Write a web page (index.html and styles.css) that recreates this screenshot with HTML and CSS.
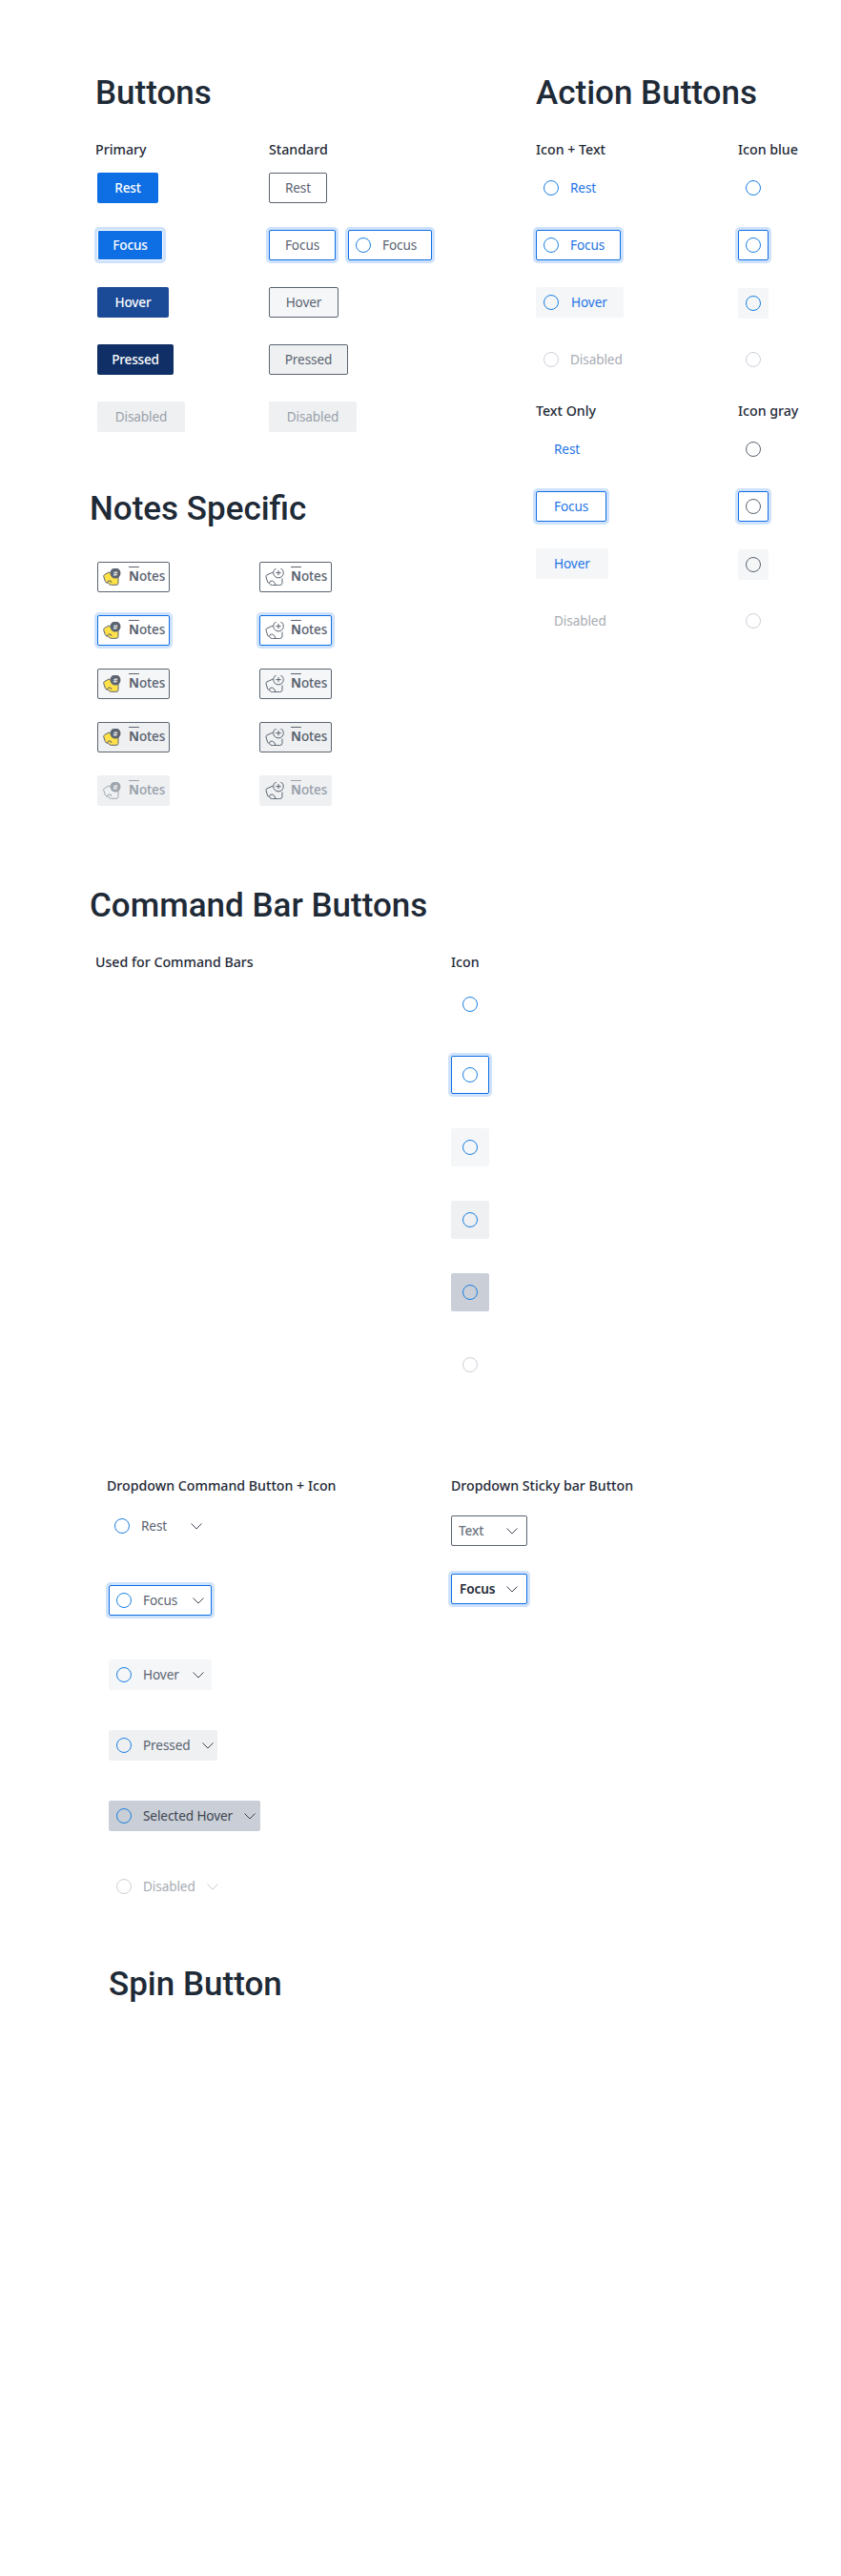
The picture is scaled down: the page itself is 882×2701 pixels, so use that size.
FILE: index.html
```html
<!DOCTYPE html>
<html lang="en">
<head>
<meta charset="utf-8">
<title>Buttons</title>
<link rel="stylesheet" href="styles.css">
</head>
<body>
<svg class="defs" width="0" height="0" aria-hidden="true">
  <symbol id="chev" viewBox="0 0 12 7"><path d="M.5.5 6 6 11.5.5" fill="none" stroke="currentColor"/></symbol>
  <symbol id="note-hash" viewBox="0 0 20 18">
    <path class="note-body" d="M6 4 1.6 6.6Q.4 7.4.8 8.8L2.4 13.6Q2.8 14.8 4 15L5.6 15.2Q6.4 17.3 8.6 17.3H14Q16 17.3 16 15.3V9Z"/>
    <path class="note-fold" d="M4 15Q5.5 12 8 13L9 15"/>
    <circle class="note-disc" cx="13" cy="5" r="5.5"/>
  </symbol>
  <symbol id="note-plus" viewBox="0 0 20 18">
    <path class="note-line" d="M8.4 4 2 6.8Q.6 7.5 1 9L2.6 14Q3 15.2 4.4 15.3Q5.2 17.6 7.6 17.6H15.4Q17.6 17.6 18 15.4V10.5"/>
    <path class="note-line" d="M4.4 15.3Q5.2 12.4 7.6 13Q10 13.6 11 17.5"/>
    <circle class="note-line" cx="14" cy="4.6" r="5.3"/>
    <path class="note-line" d="M14 2V7.2M11.4 4.6H16.6"/>
  </symbol>
</svg>

<div class="top">
  <div class="left-col">
    <h1 class="title">Buttons</h1>
    <div class="btn-cols">
      <div class="col-primary">
        <h2 class="label">Primary</h2>
        <div class="stack stack-in">
          <button class="btn primary w64">Rest</button>
          <button class="btn primary focus-inner w69">Focus</button>
          <button class="btn primary-hover w75">Hover</button>
          <button class="btn primary-pressed w80">Pressed</button>
          <button class="btn disabled w92">Disabled</button>
        </div>
      </div>
      <div>
        <h2 class="label">Standard</h2>
        <div class="stack">
          <button class="btn standard w61">Rest</button>
          <div class="focus-row">
            <button class="btn standard focus w70">Focus</button>
            <button class="btn standard focus w88 icon-left"><span class="ring blue"></span>Focus</button>
          </div>
          <button class="btn standard hover w73">Hover</button>
          <button class="btn standard pressed w83">Pressed</button>
          <button class="btn disabled w92">Disabled</button>
        </div>
      </div>
    </div>

    <h1 class="title title-notes">Notes Specific</h1>
    <div class="notes-grid">
      <button class="note"><svg class="note-icon" viewBox="0 0 20 18"><use href="#note-hash"/><text class="note-hash" x="13" y="8">#</text></svg><span class="note-text"><span class="access">N</span>otes</span></button>
      <button class="note"><svg class="note-icon" viewBox="0 0 20 18"><use href="#note-plus"/></svg><span class="note-text"><span class="access">N</span>otes</span></button>
      <button class="note focus"><svg class="note-icon" viewBox="0 0 20 18"><use href="#note-hash"/><text class="note-hash" x="13" y="8">#</text></svg><span class="note-text"><span class="access">N</span>otes</span></button>
      <button class="note focus"><svg class="note-icon" viewBox="0 0 20 18"><use href="#note-plus"/></svg><span class="note-text"><span class="access">N</span>otes</span></button>
      <button class="note hover"><svg class="note-icon" viewBox="0 0 20 18"><use href="#note-hash"/><text class="note-hash" x="13" y="8">#</text></svg><span class="note-text"><span class="access">N</span>otes</span></button>
      <button class="note hover"><svg class="note-icon" viewBox="0 0 20 18"><use href="#note-plus"/></svg><span class="note-text"><span class="access">N</span>otes</span></button>
      <button class="note pressed"><svg class="note-icon" viewBox="0 0 20 18"><use href="#note-hash"/><text class="note-hash" x="13" y="8">#</text></svg><span class="note-text"><span class="access">N</span>otes</span></button>
      <button class="note pressed"><svg class="note-icon" viewBox="0 0 20 18"><use href="#note-plus"/></svg><span class="note-text"><span class="access">N</span>otes</span></button>
      <button class="note note-off dim"><svg class="note-icon" viewBox="0 0 20 18"><use href="#note-hash"/><text class="note-hash" x="13" y="8">#</text></svg><span class="note-text"><span class="access">N</span>otes</span></button>
      <button class="note note-off"><svg class="note-icon" viewBox="0 0 20 18"><use href="#note-plus"/></svg><span class="note-text"><span class="access">N</span>otes</span></button>
    </div>
  </div>

  <div class="right-col">
    <h1 class="title">Action Buttons</h1>
    <div class="action-cols">
      <div>
        <h2 class="label">Icon + Text</h2>
        <div class="stack">
          <button class="act w92"><span class="ring blue"></span>Rest</button>
          <button class="act focus w89"><span class="ring blue"></span>Focus</button>
          <button class="act hover w92"><span class="ring blue"></span><span class="nudge">Hover</span></button>
          <button class="act off w92"><span class="ring faint"></span>Disabled</button>
        </div>
      </div>
      <div>
        <h2 class="label">Icon blue</h2>
        <div class="stack">
          <button class="sq"><span class="ring blue"></span></button>
          <button class="sq focus"><span class="ring blue"></span></button>
          <button class="sq hover drop1"><span class="ring blue"></span></button>
          <button class="sq"><span class="ring faint"></span></button>
        </div>
      </div>
      <div>
        <h2 class="label label-gap">Text Only</h2>
        <div class="stack">
          <button class="act text-only w74">Rest</button>
          <button class="act text-only focus w74">Focus</button>
          <button class="act text-only hover w76">Hover</button>
          <button class="act text-only off w92">Disabled</button>
        </div>
      </div>
      <div>
        <h2 class="label label-gap">Icon gray</h2>
        <div class="stack">
          <button class="sq"><span class="ring gray"></span></button>
          <button class="sq focus"><span class="ring gray"></span></button>
          <button class="sq hover drop1"><span class="ring gray"></span></button>
          <button class="sq"><span class="ring faint"></span></button>
        </div>
      </div>
    </div>
  </div>
</div>

<section class="command">
  <h1 class="title">Command Bar Buttons</h1>
  <div class="command-cols">
    <h2 class="label">Used for Command Bars</h2>
    <div>
      <h2 class="label">Icon</h2>
      <div class="stack-lg">
        <button class="sq40 first"><span class="ring blue"></span></button>
        <button class="sq40 focus"><span class="ring blue"></span></button>
        <button class="sq40 hover"><span class="ring blue"></span></button>
        <button class="sq40 pressed"><span class="ring blue"></span></button>
        <button class="sq40 selected"><span class="ring blue"></span></button>
        <button class="sq40"><span class="ring faint"></span></button>
      </div>
    </div>
  </div>
</section>

<section class="dropdowns">
  <div class="dd-col">
    <h2 class="label">Dropdown Command Button + Icon</h2>
    <div class="dd-stack">
      <button class="dd dd-rest w108"><span class="ring blue"></span>Rest<svg class="chev"><use href="#chev"/></svg></button>
      <button class="dd dd-spaced focus w108"><span class="ring blue"></span>Focus<svg class="chev"><use href="#chev"/></svg></button>
      <button class="dd hover w108"><span class="ring blue"></span>Hover<svg class="chev"><use href="#chev"/></svg></button>
      <button class="dd pressed w114"><span class="ring blue"></span>Pressed<svg class="chev"><use href="#chev"/></svg></button>
      <button class="dd selected w159"><span class="ring blue"></span>Selected Hover<svg class="chev"><use href="#chev"/></svg></button>
      <button class="dd dd-off w118"><span class="ring faint"></span>Disabled<svg class="chev"><use href="#chev"/></svg></button>
    </div>
  </div>
  <div>
    <h2 class="label">Dropdown Sticky bar Button</h2>
    <div class="sticky-stack">
      <button class="sticky">Text<svg class="chev"><use href="#chev"/></svg></button>
      <button class="sticky focus strong">Focus<svg class="chev"><use href="#chev"/></svg></button>
    </div>
  </div>
</section>

<h1 class="title title-spin">Spin Button</h1>
</body>
</html>
```
FILE: styles.css
```css
* { box-sizing: border-box; }
html, body { margin: 0; background: #fff; }
body {
  min-height: 2701px;
  font-family: "Noto Sans", "Open Sans", sans-serif;
  font-size: 13.6px;
  letter-spacing: -0.1px;
  color: #5b6470;
}
.defs { position: absolute; }
button {
  font: inherit;
  letter-spacing: inherit;
  color: inherit;
  margin: 0;
  padding: 0;
  border: 0;
  background: none;
  cursor: default;
  flex: none;
}
.title {
  margin: 0;
  font-family: Roboto, "Liberation Sans", sans-serif;
  font-size: 35px;
  line-height: 44px;
  font-weight: 500;
  letter-spacing: 0;
  color: #1f2a37;
  white-space: nowrap;
}
.label {
  margin: 0;
  height: 20px;
  font-size: 14.2px;
  line-height: 18px;
  font-weight: 500;
  letter-spacing: 0;
  color: #1f2a37;
  white-space: nowrap;
}

.top { display: flex; padding: 76px 0 0 100px; }
.left-col { width: 462px; flex: none; }
.btn-cols { display: grid; grid-template-columns: 182px auto; margin-top: 28px; }
.stack { display: flex; flex-direction: column; align-items: flex-start; gap: 28px; margin-top: 13px; }
.stack-in { padding-left: 2px; }
.focus-row { display: flex; gap: 13px; }

.btn {
  height: 32px;
  padding-bottom: 2px;
  border-radius: 2px;
  display: flex;
  align-items: center;
  justify-content: center;
  font-weight: 400;
  white-space: nowrap;
}
.primary { background: #0e6ee4; color: #fff; font-weight: 500; letter-spacing: -0.2px; }
.primary.focus-inner { border: 1px solid #fff; box-shadow: 0 0 0 3px #cfe2fb; }
.primary-hover { background: #1b4b96; color: #fff; font-weight: 500; letter-spacing: -0.2px; }
.primary-pressed { background: #0f2f66; color: #fff; font-weight: 500; letter-spacing: -0.2px; }
.disabled { background: #eef0f2; color: #9aa1aa; }
.standard { border: 1px solid #5b6470; background: #fff; color: #5b6470; }
.btn.hover { background: #f4f6f8; }
.btn.pressed { background: #eef0f2; }
.btn.focus { border-color: #0e6ee4; box-shadow: 0 0 0 3px #cfe2fb; }
.icon-left { justify-content: flex-start; padding-left: 7px; gap: 12px; }

.w61 { width: 61px; } .w64 { width: 64px; } .w69 { width: 69px; } .w70 { width: 70px; }
.w73 { width: 73px; } .w74 { width: 74px; } .w75 { width: 75px; } .w76 { width: 76px; }
.w80 { width: 80px; } .w83 { width: 83px; } .w88 { width: 88px; } .w89 { width: 89px; }
.w92 { width: 92px; } .w108 { width: 108px; } .w114 { width: 114px; } .w118 { width: 118px; } .w159 { width: 159px; }

.ring { width: 16px; height: 16px; border: 1px solid; border-radius: 50%; flex: none; display: block; }
.ring.blue { border-color: #1c80e2; }
.ring.gray { border-color: #5b6470; }
.ring.faint { border-color: #ccd1d8; }
.btn .ring, .act .ring, .dd .ring { margin-top: 2px; }

.title-notes { margin: 59px 0 0 -6px; }
.notes-grid { display: grid; grid-template-columns: 170px 76px; row-gap: 24px; margin: 33px 0 0 2px; }
.note {
  width: 76px;
  height: 32px;
  border: 1px solid #5b6470;
  border-radius: 2px;
  background: #fff;
  display: flex;
  align-items: center;
  padding-left: 5px;
  gap: 7px;
  color: #5b6470;
  --note-fill: #ffe14a;
  --note-line: #5b6470;
  --note-disc: #5b6470;
}
.note.hover { background: #f4f6f8; }
.note.pressed { background: #eef0f2; }
.note.focus { border-color: #0e6ee4; box-shadow: 0 0 0 3px #cfe2fb; }
.note-off { border-color: #eef0f2; background: #eef0f2; color: #9aa1aa; }
.note-off.dim { --note-fill: none; --note-line: #a0a6ae; --note-disc: #a0a6ae; }
.note-icon { width: 20px; height: 18px; flex: none; }
.note-body { fill: var(--note-fill); stroke: var(--note-line); stroke-width: 1; }
.note-fold { fill: none; stroke: var(--note-line); stroke-width: 1; }
.note-line { fill: none; stroke: var(--note-line); stroke-width: 1; }
.note-disc { fill: var(--note-disc); }
.note-hash { fill: #fff; font-family: "Liberation Sans", sans-serif; font-size: 8px; font-weight: 700; text-anchor: middle; }
.note-text { font-size: 13.5px; line-height: 20px; font-weight: 500; margin-bottom: 2px; }
.access { font-weight: 700; text-decoration: overline; }

.action-cols { display: grid; grid-template-columns: 212px auto; margin-top: 28px; row-gap: 29px; }
.act {
  height: 32px;
  display: flex;
  align-items: center;
  gap: 12px;
  padding: 0 0 2px 7px;
  color: #1f75e6;
  border-radius: 2px;
  border: 1px solid transparent;
  white-space: nowrap;
}
.act.text-only { padding-left: 18px; }
.act.hover { background: #f4f6f8; border-color: #f4f6f8; }
.act.focus { border-color: #0e6ee4; box-shadow: 0 0 0 3px #cfe2fb; }
.act.off { color: #a6abb2; }
.nudge { margin-left: 1px; }
.sq {
  width: 32px;
  height: 32px;
  display: flex;
  align-items: center;
  justify-content: center;
  border: 1px solid transparent;
  border-radius: 2px;
}
.sq.hover { background: #f4f6f8; }
.sq.focus { border-color: #0e6ee4; box-shadow: 0 0 0 3px #cfe2fb; }
.drop1 { margin-top: 1px; margin-bottom: -1px; }

.command { margin-top: 83px; padding-left: 94px; }
.command-cols { display: grid; grid-template-columns: 373px auto; margin-top: 28px; padding-left: 6px; }
.stack-lg { display: flex; flex-direction: column; gap: 36px; margin-top: 13px; }
.sq40 {
  width: 40px;
  height: 40px;
  display: flex;
  align-items: center;
  justify-content: center;
  border: 1px solid transparent;
  border-radius: 2px;
}
.sq40.first { margin-bottom: -2px; }
.sq40.focus { border-color: #0e6ee4; box-shadow: 0 0 0 3px #cfe2fb; }
.sq40.hover { background: #f4f6f8; }
.sq40.pressed { background: #eef0f2; }
.sq40.selected { background: #c9ced7; }

.dropdowns { display: flex; margin-top: 98px; padding-left: 112px; }
.dd-col { width: 361px; flex: none; }
.dd-stack { display: flex; flex-direction: column; align-items: flex-start; gap: 42px; margin-top: 15px; }
.dd {
  height: 32px;
  display: flex;
  align-items: center;
  gap: 12px;
  padding: 0 7px 2px;
  margin-left: 2px;
  border: 1px solid transparent;
  border-radius: 2px;
  color: #5b6470;
  white-space: nowrap;
}
.dd-rest { margin-left: 0; margin-bottom: 4px; }
.dd-spaced { margin-bottom: 4px; }
.dd.focus { border-color: #0e6ee4; box-shadow: 0 0 0 3px #cfe2fb; }
.dd.hover { background: #f4f6f8; }
.dd.pressed { background: #eef0f2; }
.dd.selected { background: #c9ced7; color: #3d4550; }
.dd-off { color: #a6abb2; }
.chev { width: 12px; height: 7px; margin: 2px 0 0 auto; color: #3d4550; flex: none; }
.dd-off .chev { color: #c4c8ce; }
.sticky-stack { display: flex; flex-direction: column; align-items: flex-start; gap: 29px; margin-top: 20px; }
.sticky {
  width: 80px;
  height: 32px;
  display: flex;
  align-items: center;
  padding: 0 9px 2px 7px;
  border: 1px solid #5b6470;
  border-radius: 2px;
  background: #fff;
  color: #6b7480;
  font-weight: 500;
}
.sticky.focus { border-color: #0e6ee4; box-shadow: 0 0 0 3px #cfe2fb; }
.sticky.strong { color: #1f2a37; font-weight: 600; padding-left: 8px; }

.title-spin { margin: 65px 0 0 114px; }
```
